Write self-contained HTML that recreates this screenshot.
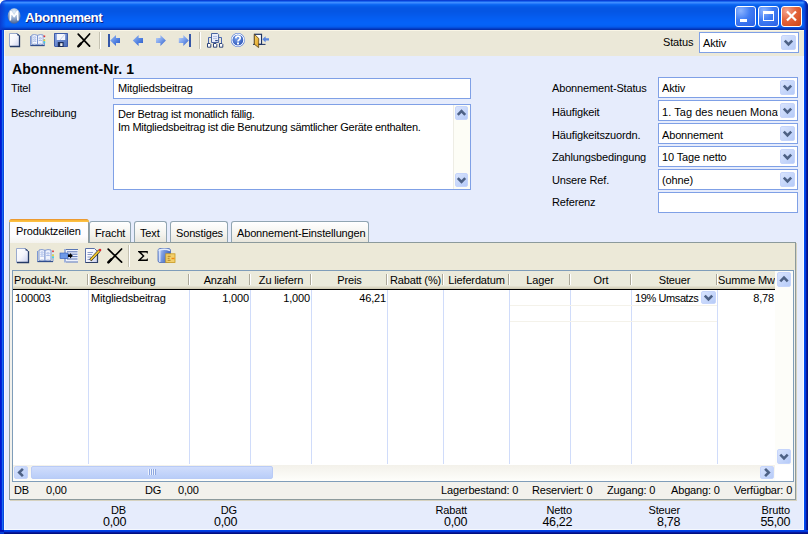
<!DOCTYPE html>
<html><head><meta charset="utf-8"><style>
*{box-sizing:border-box;margin:0;padding:0}
html,body{width:808px;height:534px;overflow:hidden;background:#fff}
body{position:relative;font-family:"Liberation Sans",sans-serif;font-size:11px;line-height:13px;color:#000}
.a{position:absolute}
.t{position:absolute;white-space:nowrap;letter-spacing:-0.15px}
.box{position:absolute;background:#fff;border:1px solid #7fa0e6}
.dd{position:absolute;width:15px;height:15px;border-radius:2px;background:linear-gradient(135deg,#d9e4fd,#b6cbf8);border:1px solid #c6d5fb}
.chev{position:absolute;width:6px;height:6px;border-right:2px solid #4d6185;border-bottom:2px solid #4d6185}
.tab{position:absolute;border:1px solid #91a5b2;border-bottom:none;border-radius:3px 3px 0 0;background:linear-gradient(#fff,#f4f3ee 60%,#e8e6dc)}
</style></head><body>
<div class="a" style="left:0;top:0;width:808px;height:30px;border-radius:6px 6px 0 0;overflow:hidden;background:linear-gradient(#0a3fd4 0px,#0a3fd4 1px,#1c66f0 1px,#1c66f0 2px,#3d8dff 2px,#3d8dff 3px,#2a7cfc 3px,#2a7cfc 4px,#0f6af4 4px,#0f6af4 5px,#0862ee 5px,#0862ee 6px,#065ce8 6px,#065ce8 7px,#0558e6 7px,#0558e6 8px,#0556e4 8px,#0556e4 9px,#0556e4 9px,#0556e4 10px,#0556e4 10px,#0556e4 11px,#0556e4 11px,#0556e4 12px,#0557e6 12px,#0557e6 13px,#0558e8 13px,#0558e8 14px,#0559ea 14px,#0559ea 15px,#055aec 15px,#055aec 16px,#055cee 16px,#055cee 17px,#055df0 17px,#055df0 18px,#055ef2 18px,#055ef2 19px,#055ff4 19px,#055ff4 20px,#0560f6 20px,#0560f6 21px,#0561f7 21px,#0561f7 22px,#0562f8 22px,#0562f8 23px,#0562f8 23px,#0562f8 24px,#0562f8 24px,#0562f8 25px,#0560f4 25px,#0560f4 26px,#055cee 26px,#055cee 27px,#0550e0 27px,#0550e0 28px,#0440c8 28px,#0440c8 29px,#0430b0 29px,#0430b0 30px)"></div>
<div class="a" style="left:0;top:0;width:8px;height:30px;border-radius:6px 0 0 0;background:linear-gradient(90deg,#0a3cd0,rgba(10,80,230,0) 6px)"></div>
<div class="a" style="left:800px;top:0;width:8px;height:30px;border-radius:0 6px 0 0;background:linear-gradient(90deg,rgba(10,80,230,0) 3px,#0a40d8 5px,#0828b0 6px,#001888 8px)"></div>
<div class="a" style="left:0;top:30px;width:4px;height:504px;background:linear-gradient(90deg,#0018d0 0px,#0018d0 1px,#0024d8 1px,#0024d8 2px,#1a6af0 2px,#1a6af0 3px,#0848e0 3px,#0848e0 4px)"></div>
<div class="a" style="left:804px;top:30px;width:4px;height:504px;background:linear-gradient(90deg,#0048f0 0px,#0048f0 1px,#0040e0 1px,#0040e0 2px,#0818a0 2px,#0818a0 3px,#001080 3px,#001080 4px)"></div>
<div class="a" style="left:0;top:530px;width:808px;height:4px;background:linear-gradient(180deg,#0040e8 0px,#0040e8 1px,#0038d8 1px,#0038d8 2px,#0818a0 2px,#0818a0 3px,#001080 3px,#001080 4px)"></div>
<div class="a" style="left:0;top:530px;width:4px;height:4px;background:linear-gradient(180deg,#0010b0 0px,#0010b0 1px,#0018c0 1px,#0018c0 2px,#0a40d0 2px,#0a40d0 3px,#0038d8 3px,#0038d8 4px)"></div>
<svg class="a" style="left:0;top:0" width="30" height="30"><defs><radialGradient id="gi" cx="0.5" cy="0.22" r="0.85"><stop offset="0" stop-color="#e4f0fa"/><stop offset="0.45" stop-color="#9cb4d4"/><stop offset="1" stop-color="#34508a"/></radialGradient></defs><ellipse cx="14.1" cy="16" rx="6.4" ry="7.8" fill="url(#gi)"/><path d="M10.3 20.5 L10.8 11.5 L14.1 16.5 L17.4 11.5 L17.9 20.5" fill="none" stroke="#fff" stroke-width="1.7" stroke-linejoin="round"/></svg>
<div class="a" style="left:25px;top:10px;font-weight:bold;font-size:13.4px;line-height:15px;letter-spacing:-0.45px;color:#fff;text-shadow:1px 1px 0 #0a2080;white-space:nowrap">Abonnement</div>
<div class="a" style="left:735px;top:6px;width:21px;height:21px;border:1px solid #fff;border-radius:3px;background:radial-gradient(circle at 25% 20%,#8cb4ff 0,#3f7cf4 45%,#2a5fe4 100%)"><div class="a" style="left:4px;top:12px;width:7px;height:3px;background:#fff"></div></div>
<div class="a" style="left:758px;top:6px;width:21px;height:21px;border:1px solid #fff;border-radius:3px;background:radial-gradient(circle at 25% 20%,#8cb4ff 0,#3f7cf4 45%,#2a5fe4 100%)"><div class="a" style="left:4px;top:4px;width:11px;height:10px;border:1px solid #fff;border-top-width:3px"></div></div>
<div class="a" style="left:781px;top:6px;width:21px;height:21px;border:1px solid #fff;border-radius:3px;background:radial-gradient(circle at 25% 20%,#f4a490 0,#e4643c 45%,#cc4414 100%)"><svg class="a" style="left:0;top:0" width="19" height="19"><path d="M5 4.5 L14 13.5 M14 4.5 L5 13.5" stroke="#fff" stroke-width="2.2"/></svg></div>
<div class="a" style="left:4px;top:30px;width:800px;height:500px;background:#e6ecfc;border-left:1px solid #f4f8ff;border-right:1px solid #f4f8ff;border-bottom:1px solid #f4f8ff"></div>
<div class="a" style="left:4px;top:30px;width:800px;height:26px;background:#ebe8d8;border-top:1px solid #faf6e6;border-left:1px solid #f8f6ee"></div>
<div class="a" style="left:99px;top:32px;width:1px;height:17px;background:#c5c2b2"></div><div class="a" style="left:100px;top:32px;width:1px;height:17px;background:#fff"></div>
<div class="a" style="left:199px;top:32px;width:1px;height:17px;background:#c5c2b2"></div><div class="a" style="left:200px;top:32px;width:1px;height:17px;background:#fff"></div>
<div class="t" style="left:663px;top:36px;">Status</div>
<div class="box" style="left:699px;top:32px;width:100px;height:21px"></div>
<div class="t" style="left:703px;top:37px;">Aktiv</div>
<div class="dd" style="left:781px;top:35px;width:15px;height:15px"><svg class="a" style="left:-1px;top:-1px" width="15" height="15"><polyline points="3.8,5.6 7.5,9.3 11.2,5.6" fill="none" stroke="#4d6185" stroke-width="2.6"/></svg></div>
<div class="a" style="left:12px;top:61px;font-weight:bold;font-size:14px;line-height:16px;letter-spacing:0.1px;white-space:nowrap">Abonnement-Nr. 1</div>
<div class="t" style="left:11px;top:82px;">Titel</div>
<div class="box" style="left:113px;top:78px;width:358px;height:21px"></div>
<div class="t" style="left:118px;top:82px;">Mitgliedsbeitrag</div>
<div class="t" style="left:11px;top:107px;">Beschreibung</div>
<div class="box" style="left:113px;top:104px;width:358px;height:86px"></div>
<div class="t" style="left:118px;top:108px;letter-spacing:-0.3px">Der Betrag ist monatlich fällig.</div>
<div class="t" style="left:118px;top:121px;letter-spacing:-0.28px">Im Mitgliedsbeitrag ist die Benutzung sämtlicher Geräte enthalten.</div>
<div class="a" style="left:453px;top:105px;width:17px;height:84px;background:#fdfdf6;border-left:1px solid #eeede5"></div>
<div class="dd" style="left:455px;top:106px;width:13px;height:14px"><svg class="a" style="left:-1px;top:-1px" width="13" height="14"><polyline points="2.8,8.9 6.5,5.2 10.2,8.9" fill="none" stroke="#4d6185" stroke-width="2.6"/></svg></div>
<div class="dd" style="left:455px;top:173px;width:13px;height:14px"><svg class="a" style="left:-1px;top:-1px" width="13" height="14"><polyline points="2.8,5.1 6.5,8.8 10.2,5.1" fill="none" stroke="#4d6185" stroke-width="2.6"/></svg></div>
<div class="t" style="left:552px;top:82px;">Abonnement-Status</div>
<div class="box" style="left:658px;top:77px;width:140px;height:21px;overflow:hidden"><div class="t" style="left:3px;top:4px;width:116px;overflow:hidden;letter-spacing:-0.15px">Aktiv</div></div>
<div class="dd" style="left:780px;top:80px;width:15px;height:15px"><svg class="a" style="left:-1px;top:-1px" width="15" height="15"><polyline points="3.8,5.6 7.5,9.3 11.2,5.6" fill="none" stroke="#4d6185" stroke-width="2.6"/></svg></div>
<div class="t" style="left:552px;top:106px;">Häufigkeit</div>
<div class="box" style="left:658px;top:100px;width:140px;height:21px;overflow:hidden"><div class="t" style="left:3px;top:5px;width:116px;overflow:hidden;letter-spacing:0.05px">1. Tag des neuen Monat</div></div>
<div class="dd" style="left:780px;top:103px;width:15px;height:15px"><svg class="a" style="left:-1px;top:-1px" width="15" height="15"><polyline points="3.8,5.6 7.5,9.3 11.2,5.6" fill="none" stroke="#4d6185" stroke-width="2.6"/></svg></div>
<div class="t" style="left:552px;top:129px;">Häufigkeitszuordn.</div>
<div class="box" style="left:658px;top:123px;width:140px;height:21px;overflow:hidden"><div class="t" style="left:3px;top:5px;width:116px;overflow:hidden;letter-spacing:-0.15px">Abonnement</div></div>
<div class="dd" style="left:780px;top:126px;width:15px;height:15px"><svg class="a" style="left:-1px;top:-1px" width="15" height="15"><polyline points="3.8,5.6 7.5,9.3 11.2,5.6" fill="none" stroke="#4d6185" stroke-width="2.6"/></svg></div>
<div class="t" style="left:552px;top:151px;">Zahlungsbedingung</div>
<div class="box" style="left:658px;top:146px;width:140px;height:21px;overflow:hidden"><div class="t" style="left:3px;top:4px;width:116px;overflow:hidden;letter-spacing:-0.15px">10 Tage netto</div></div>
<div class="dd" style="left:780px;top:149px;width:15px;height:15px"><svg class="a" style="left:-1px;top:-1px" width="15" height="15"><polyline points="3.8,5.6 7.5,9.3 11.2,5.6" fill="none" stroke="#4d6185" stroke-width="2.6"/></svg></div>
<div class="t" style="left:552px;top:174px;">Unsere Ref.</div>
<div class="box" style="left:658px;top:169px;width:140px;height:21px;overflow:hidden"><div class="t" style="left:3px;top:4px;width:116px;overflow:hidden;letter-spacing:-0.15px">(ohne)</div></div>
<div class="dd" style="left:780px;top:172px;width:15px;height:15px"><svg class="a" style="left:-1px;top:-1px" width="15" height="15"><polyline points="3.8,5.6 7.5,9.3 11.2,5.6" fill="none" stroke="#4d6185" stroke-width="2.6"/></svg></div>
<div class="t" style="left:552px;top:196px;">Referenz</div>
<div class="box" style="left:658px;top:192px;width:140px;height:21px;overflow:hidden"><div class="t" style="left:3px;top:3px;width:116px;overflow:hidden;letter-spacing:-0.15px"></div></div>
<div class="a" style="left:9px;top:242px;width:787px;height:258px;background:#f2f1ec;border:1px solid #8c9a9c;box-shadow:1px 1px 0 #d6d2c0"></div>
<div class="a" style="left:10px;top:243px;width:785px;height:27px;background:#ece9d8"></div>
<div class="tab" style="left:89px;top:221px;width:42px;height:21px"></div>
<div class="t" style="left:95px;top:227px;">Fracht</div>
<div class="tab" style="left:134px;top:221px;width:33px;height:21px"></div>
<div class="t" style="left:140px;top:227px;">Text</div>
<div class="tab" style="left:170px;top:221px;width:58px;height:21px"></div>
<div class="t" style="left:176px;top:227px;">Sonstiges</div>
<div class="tab" style="left:231px;top:221px;width:138px;height:21px"></div>
<div class="t" style="left:237px;top:227px;">Abonnement-Einstellungen</div>
<div class="a" style="left:9px;top:219px;width:80px;height:24px;border:1px solid #919b9c;border-bottom:none;border-radius:4px 4px 0 0;background:linear-gradient(#fff,#fcfcfe 70%,#f4f3ee)"></div>
<div class="a" style="left:9px;top:219px;width:80px;height:3px;border-radius:3px 3px 0 0;background:linear-gradient(#e68b2c,#ffc73c 2px,#f9b84a)"></div>
<div class="t" style="left:16px;top:225px;">Produktzeilen</div>
<div class="a" style="left:128px;top:245px;width:1px;height:22px;background:#c5c2b2"></div><div class="a" style="left:129px;top:245px;width:1px;height:22px;background:#fff"></div>
<div class="a" style="left:12px;top:270px;width:782px;height:212px;background:#fff;border:1px solid #7f9db9"></div>
<div class="a" style="left:13px;top:271px;width:762px;height:18px;background:linear-gradient(#ebeadb 0px,#ebeadb 1px,#ebeadb 14px,#ebeadb 15px,#e3e0cf 15px,#e3e0cf 16px,#dbd7c3 16px,#dbd7c3 17px,#d0cbb5 17px,#d0cbb5 18px)"></div>
<div class="a" style="left:13px;top:289px;width:762px;height:1px;background:#000"></div>
<div class="t" style="left:14px;top:274px;width:74px;overflow:hidden">Produkt-Nr.</div>
<div class="t" style="left:90px;top:274px;width:99px;overflow:hidden">Beschreibung</div>
<div class="t" style="left:190px;top:274px;width:60px;text-align:center;overflow:hidden">Anzahl</div>
<div class="t" style="left:251px;top:274px;width:60px;text-align:center;overflow:hidden">Zu liefern</div>
<div class="t" style="left:312px;top:274px;width:75px;text-align:center;overflow:hidden">Preis</div>
<div class="t" style="left:388px;top:274px;width:55px;text-align:center;overflow:hidden">Rabatt (%)</div>
<div class="t" style="left:444px;top:274px;width:65px;text-align:center;overflow:hidden">Lieferdatum</div>
<div class="t" style="left:510px;top:274px;width:60px;text-align:center;overflow:hidden">Lager</div>
<div class="t" style="left:571px;top:274px;width:60px;text-align:center;overflow:hidden">Ort</div>
<div class="t" style="left:632px;top:274px;width:85px;text-align:center;overflow:hidden">Steuer</div>
<div class="t" style="left:718px;top:274px;width:57px;text-align:center;overflow:hidden">Summe MwSt</div>
<div class="a" style="left:87px;top:274px;width:1px;height:11px;background:#aca899"></div>
<div class="a" style="left:88px;top:274px;width:1px;height:11px;background:#fff"></div>
<div class="a" style="left:88px;top:290px;width:1px;height:174px;background:#d0dcfa"></div>
<div class="a" style="left:188px;top:274px;width:1px;height:11px;background:#aca899"></div>
<div class="a" style="left:189px;top:274px;width:1px;height:11px;background:#fff"></div>
<div class="a" style="left:189px;top:290px;width:1px;height:174px;background:#d0dcfa"></div>
<div class="a" style="left:249px;top:274px;width:1px;height:11px;background:#aca899"></div>
<div class="a" style="left:250px;top:274px;width:1px;height:11px;background:#fff"></div>
<div class="a" style="left:250px;top:290px;width:1px;height:174px;background:#d0dcfa"></div>
<div class="a" style="left:310px;top:274px;width:1px;height:11px;background:#aca899"></div>
<div class="a" style="left:311px;top:274px;width:1px;height:11px;background:#fff"></div>
<div class="a" style="left:311px;top:290px;width:1px;height:174px;background:#d0dcfa"></div>
<div class="a" style="left:386px;top:274px;width:1px;height:11px;background:#aca899"></div>
<div class="a" style="left:387px;top:274px;width:1px;height:11px;background:#fff"></div>
<div class="a" style="left:387px;top:290px;width:1px;height:174px;background:#d0dcfa"></div>
<div class="a" style="left:442px;top:274px;width:1px;height:11px;background:#aca899"></div>
<div class="a" style="left:443px;top:274px;width:1px;height:11px;background:#fff"></div>
<div class="a" style="left:443px;top:290px;width:1px;height:174px;background:#d0dcfa"></div>
<div class="a" style="left:508px;top:274px;width:1px;height:11px;background:#aca899"></div>
<div class="a" style="left:509px;top:274px;width:1px;height:11px;background:#fff"></div>
<div class="a" style="left:509px;top:290px;width:1px;height:174px;background:#d0dcfa"></div>
<div class="a" style="left:569px;top:274px;width:1px;height:11px;background:#aca899"></div>
<div class="a" style="left:570px;top:274px;width:1px;height:11px;background:#fff"></div>
<div class="a" style="left:570px;top:290px;width:1px;height:174px;background:#d0dcfa"></div>
<div class="a" style="left:630px;top:274px;width:1px;height:11px;background:#aca899"></div>
<div class="a" style="left:631px;top:274px;width:1px;height:11px;background:#fff"></div>
<div class="a" style="left:631px;top:290px;width:1px;height:174px;background:#d0dcfa"></div>
<div class="a" style="left:716px;top:274px;width:1px;height:11px;background:#aca899"></div>
<div class="a" style="left:717px;top:274px;width:1px;height:11px;background:#fff"></div>
<div class="a" style="left:717px;top:290px;width:1px;height:174px;background:#d0dcfa"></div>
<div class="a" style="left:510px;top:305px;width:207px;height:1px;background:#f4f2ea"></div>
<div class="a" style="left:510px;top:321px;width:207px;height:1px;background:#f4f2ea"></div>
<div class="t" style="left:15px;top:292px;">100003</div>
<div class="t" style="left:91px;top:292px;">Mitgliedsbeitrag</div>
<div class="t" style="left:189px;top:292px;width:60px;text-align:right;">1,000</div>
<div class="t" style="left:250px;top:292px;width:60px;text-align:right;">1,000</div>
<div class="t" style="left:311px;top:292px;width:75px;text-align:right;">46,21</div>
<div class="t" style="left:635px;top:292px;letter-spacing:-0.4px">19% Umsatzs</div>
<div class="dd" style="left:701px;top:291px;width:15px;height:13px"><svg class="a" style="left:-1px;top:-1px" width="15" height="13"><polyline points="3.8,4.6 7.5,8.3 11.2,4.6" fill="none" stroke="#4d6185" stroke-width="2.6"/></svg></div>
<div class="t" style="left:717px;top:292px;width:57px;text-align:right;">8,78</div>
<div class="a" style="left:775px;top:271px;width:18px;height:194px;background:#fdfdf9"></div>
<div class="dd" style="left:777px;top:272px;width:14px;height:15px"><svg class="a" style="left:-1px;top:-1px" width="14" height="15"><polyline points="3.3,9.4 7.0,5.7 10.7,9.4" fill="none" stroke="#4d6185" stroke-width="2.6"/></svg></div>
<div class="dd" style="left:777px;top:449px;width:14px;height:15px"><svg class="a" style="left:-1px;top:-1px" width="14" height="15"><polyline points="3.3,5.6 7.0,9.3 10.7,5.6" fill="none" stroke="#4d6185" stroke-width="2.6"/></svg></div>
<div class="a" style="left:13px;top:465px;width:762px;height:16px;background:linear-gradient(#f3f1ea,#fefefb)"></div>
<div class="dd" style="left:14px;top:466px;width:14px;height:13px"><svg class="a" style="left:-1px;top:-1px" width="14" height="13"><polyline points="8.9,2.8 5.2,6.5 8.9,10.2" fill="none" stroke="#4d6185" stroke-width="2.6"/></svg></div>
<div class="dd" style="left:760px;top:466px;width:14px;height:13px"><svg class="a" style="left:-1px;top:-1px" width="14" height="13"><polyline points="5.1,2.8 8.8,6.5 5.1,10.2" fill="none" stroke="#4d6185" stroke-width="2.6"/></svg></div>
<div class="a" style="left:31px;top:466px;width:242px;height:13px;border-radius:2px;border:1px solid #b9cbf6;background:linear-gradient(#d0ddfc,#b9cdf8)"></div>
<div class="a" style="left:148px;top:469px;width:8px;height:6px;background:repeating-linear-gradient(90deg,#eef3fe 0 1px,#8da7e0 1px 2px)"></div>
<div class="a" style="left:775px;top:465px;width:18px;height:16px;background:#fff"></div>
<div class="t" style="left:14px;top:484px;">DB</div>
<div class="t" style="left:46px;top:484px;">0,00</div>
<div class="t" style="left:145px;top:484px;">DG</div>
<div class="t" style="left:178px;top:484px;">0,00</div>
<div class="t" style="left:441px;top:484px;">Lagerbestand: 0</div>
<div class="t" style="left:532px;top:484px;">Reserviert: 0</div>
<div class="t" style="left:607px;top:484px;">Zugang: 0</div>
<div class="t" style="left:671px;top:484px;">Abgang: 0</div>
<div class="t" style="left:734px;top:484px;">Verfügbar: 0</div>
<div class="t" style="left:46px;top:504px;width:80px;text-align:right;">DB</div>
<div class="t" style="left:46px;top:515px;width:80px;text-align:right;font-size:12.5px;line-height:14px;letter-spacing:-0.35px">0,00</div>
<div class="t" style="left:157px;top:504px;width:80px;text-align:right;">DG</div>
<div class="t" style="left:157px;top:515px;width:80px;text-align:right;font-size:12.5px;line-height:14px;letter-spacing:-0.35px">0,00</div>
<div class="t" style="left:387px;top:504px;width:80px;text-align:right;">Rabatt</div>
<div class="t" style="left:387px;top:515px;width:80px;text-align:right;font-size:12.5px;line-height:14px;letter-spacing:-0.35px">0,00</div>
<div class="t" style="left:492px;top:504px;width:80px;text-align:right;">Netto</div>
<div class="t" style="left:492px;top:515px;width:80px;text-align:right;font-size:12.5px;line-height:14px;letter-spacing:-0.35px">46,22</div>
<div class="t" style="left:600px;top:504px;width:80px;text-align:right;">Steuer</div>
<div class="t" style="left:600px;top:515px;width:80px;text-align:right;font-size:12.5px;line-height:14px;letter-spacing:-0.35px">8,78</div>
<div class="t" style="left:710px;top:504px;width:80px;text-align:right;">Brutto</div>
<div class="t" style="left:710px;top:515px;width:80px;text-align:right;font-size:12.5px;line-height:14px;letter-spacing:-0.35px">55,00</div>
<svg class="a" style="left:0;top:0" width="808" height="534">
<defs>
<linearGradient id="gPage" x1="0" y1="0" x2="1" y2="1"><stop offset="0" stop-color="#ffffff"/><stop offset="0.5" stop-color="#f4f5fc"/><stop offset="1" stop-color="#c9cfee"/></linearGradient>
<linearGradient id="gArrL" x1="0" y1="0" x2="1" y2="1"><stop offset="0" stop-color="#9dbcf4"/><stop offset="0.6" stop-color="#4f7fe0"/><stop offset="1" stop-color="#2b58c0"/></linearGradient>
<linearGradient id="gArrR" x1="0" y1="0" x2="1" y2="1"><stop offset="0" stop-color="#c5d8fa"/><stop offset="0.5" stop-color="#7aa0ec"/><stop offset="1" stop-color="#2f5cc4"/></linearGradient>
<linearGradient id="gFlop" x1="0" y1="0" x2="1" y2="1"><stop offset="0" stop-color="#8aa6e4"/><stop offset="1" stop-color="#4a6cb8"/></linearGradient>
<radialGradient id="gHelp" cx="0.4" cy="0.35" r="0.7"><stop offset="0" stop-color="#7aa2ec"/><stop offset="1" stop-color="#3058b8"/></radialGradient>
<linearGradient id="gDoor" x1="0" y1="0" x2="1" y2="1"><stop offset="0" stop-color="#f8d468"/><stop offset="1" stop-color="#e0a020"/></linearGradient>
<linearGradient id="gCyl" x1="0" y1="0" x2="1" y2="0.3"><stop offset="0" stop-color="#c8d8fa"/><stop offset="0.45" stop-color="#7b9be0"/><stop offset="1" stop-color="#3d62b8"/></linearGradient>
</defs>
<!-- main toolbar -->
<!-- new -->
<g>
<path d="M9.5 33.5 H17.2 L19.5 35.8 V46.5 H9.5 Z" fill="url(#gPage)" stroke="#9aaace" stroke-width="1"/>
<path d="M19.5 35.5 V46.5 H10" fill="none" stroke="#243a66" stroke-width="1.3"/>
<path d="M17 33.6 L19.4 36" stroke="#243a66" stroke-width="1"/>
<rect x="17.3" y="34" width="1.5" height="1.5" fill="#3a5080"/>
</g>
<!-- book -->
<g>
<path d="M30.5 36 V45.5 H44.5 V36" fill="none" stroke="#7d98d4" stroke-width="1"/>
<path d="M31.8 35 Q34.5 34 37.5 35.3 V44.6 Q34.5 43.6 31.8 44.6 Z" fill="#f6f8fe" stroke="#7590cc" stroke-width="0.9"/>
<path d="M37.5 35.3 Q40.5 34 43.2 35 V44.6 Q40.5 43.6 37.5 44.6 Z" fill="#eef2fc" stroke="#7590cc" stroke-width="0.9"/>
<path d="M33.2 37.3 Q34.6 36.6 36.2 37.3 M33.2 39.3 Q34.6 38.6 36.2 39.3 M33.2 41.3 Q34.6 40.6 36.2 41.3 M38.8 38.3 Q40.2 37.6 41.8 38.3 M38.8 40.5 Q40.2 39.8 41.8 40.5" fill="none" stroke="#8aa4e0" stroke-width="0.9"/>
<path d="M30.5 45.6 H44.5" stroke="#2e4a88" stroke-width="1.1"/>
<rect x="43.6" y="35.5" width="1.6" height="1.6" fill="#e83030"/>
<rect x="43.6" y="37.5" width="1.6" height="1.6" fill="#f4f4f4"/>
<rect x="43.6" y="39.5" width="1.6" height="1.6" fill="#f0e020"/>
<rect x="43.6" y="41.5" width="1.6" height="1.6" fill="#30d8e8"/>
</g>
<!-- floppy -->
<g>
<path d="M54 33 H67.5 V47 H55 L54 46 Z" fill="url(#gFlop)"/>
<path d="M54.5 33.5 H67.5 V46.5 H55 L54.5 46 Z" fill="none" stroke="#3f5ca8" stroke-width="1"/>
<rect x="56.8" y="34" width="8.4" height="6" fill="#f4f6fc"/>
<path d="M60 40 L65 34" stroke="#c8d0ec" stroke-width="1"/>
<rect x="57.8" y="42" width="5.8" height="5" fill="#1c2e5c"/>
<rect x="60.2" y="43.2" width="2.3" height="2.8" fill="#f2f2f2"/>
</g>
<!-- delete X -->
<path d="M78.2 34.2 L89.6 46.2 M89.6 34 L78.6 46.4" stroke="#000" stroke-width="1.7" stroke-linecap="round"/>
<path d="M78.3 46.3 L80.8 43.6" stroke="#000" stroke-width="2.4" stroke-linecap="round"/>
<!-- first -->
<rect x="108" y="34" width="2" height="13" fill="#3557a8"/>
<path d="M110.2 40.5 L116 35 V38 H120 V43 H116 V46 Z" fill="url(#gArrL)"/>
<!-- prev -->
<path d="M132.8 40.5 L138.6 35 V38 H143 V43 H138.6 V46 Z" fill="url(#gArrL)"/>
<!-- next -->
<path d="M165.9 40.5 L160.4 35 V38 H156 V43 H160.4 V46 Z" fill="url(#gArrR)"/>
<!-- last -->
<path d="M188.8 40.5 L183.3 35 V38 H178.8 V43 H183.3 V46 Z" fill="url(#gArrR)"/>
<rect x="189" y="34" width="2" height="13" fill="#3557a8"/>
<!-- structure -->
<g>
<path d="M208.5 43.5 V37.5 H221.5 V43.5 M215 42.5 V43.5" fill="none" stroke="#4a68b0" stroke-width="1"/>
<path d="M211.5 33.5 H217.6 L218.6 34.5 V42.5 H211.5 Z" fill="#e8ecfa" stroke="#4a64a0" stroke-width="1"/>
<path d="M213 36.5 H217 M213 38.5 H217" stroke="#a8b8e0" stroke-width="0.8"/>
<rect x="215.2" y="40" width="2.6" height="1.2" fill="#34508e"/>
<path d="M207.5 43.5 H210 L210.8 44.3 V47.2 H207.5 Z" fill="#fff" stroke="#2e4478" stroke-width="1"/>
<path d="M213.5 43.5 H216 L216.8 44.3 V47.2 H213.5 Z" fill="#fff" stroke="#2e4478" stroke-width="1"/>
<path d="M219.5 43.5 H222 L222.8 44.3 V47.2 H219.5 Z" fill="#fff" stroke="#2e4478" stroke-width="1"/>
</g>
<!-- help -->
<g>
<circle cx="237.9" cy="40" r="7" fill="#4a72d4"/>
<circle cx="237.9" cy="40" r="5.9" fill="none" stroke="#f4f8ff" stroke-width="1.2"/>
<circle cx="237.9" cy="40" r="5.2" fill="url(#gHelp)"/>
<path d="M235.7 38.3 Q235.9 36.1 238 36.1 Q240.2 36.1 240.2 38 Q240.2 39.2 238.9 39.9 Q238 40.4 238 41.5" fill="none" stroke="#fff" stroke-width="1.7"/>
<rect x="237" y="42.5" width="2" height="1.9" fill="#fff"/>
</g>
<!-- exit -->
<g>
<rect x="254.5" y="34.3" width="7" height="10" fill="#fff" stroke="#1e3464" stroke-width="1.2"/>
<path d="M253 44.4 H265.5" stroke="#1e3464" stroke-width="1"/>
<path d="M254.3 34.3 L258.8 38.5 L258.6 47.6 L254.3 44.2 Z" fill="url(#gDoor)" stroke="#5a4218" stroke-width="0.8"/>
<path d="M262.3 39.3 L265.6 36.2 V38.2 H269 V40.6 H265.6 V42.6 Z" fill="#5a86e0"/>
</g>

<!-- inner toolbar -->
<g>
<path d="M16.5 248.5 H25.5 L28.5 251.5 V262.5 H16.5 Z" fill="url(#gPage)" stroke="#9aaace" stroke-width="1"/>
<path d="M28.5 251.2 V262.5 H17" fill="none" stroke="#243a66" stroke-width="1.3"/>
<path d="M25.3 248.6 L28.4 251.7" stroke="#243a66" stroke-width="1"/>
<rect x="25.6" y="249" width="1.6" height="1.6" fill="#3a5080"/>
</g>
<g>
<path d="M37.5 251 V261.5 H53 V251" fill="none" stroke="#7d98d4" stroke-width="1"/>
<path d="M39 250 Q42 249 45 250.3 V260.6 Q42 259.6 39 260.6 Z" fill="#f6f8fe" stroke="#7590cc" stroke-width="0.9"/>
<path d="M45 250.3 Q48 249 51 250 V260.6 Q48 259.6 45 260.6 Z" fill="#eef2fc" stroke="#7590cc" stroke-width="0.9"/>
<path d="M40.5 252.3 Q42 251.6 43.6 252.3 M40.5 254.3 Q42 253.6 43.6 254.3 M40.5 256.3 Q42 255.6 43.6 256.3 M46.4 253.3 Q48 252.6 49.6 253.3 M46.4 255.5 Q48 254.8 49.6 255.5" fill="none" stroke="#8aa4e0" stroke-width="0.9"/>
<path d="M37.5 261.6 H53" stroke="#2e4a88" stroke-width="1.1"/>
<rect x="52.2" y="250.5" width="1.6" height="1.6" fill="#e83030"/>
<rect x="52.2" y="252.5" width="1.6" height="1.6" fill="#f4f4f4"/>
<rect x="52.2" y="254.5" width="1.6" height="1.6" fill="#f0e020"/>
<rect x="52.2" y="256.5" width="1.6" height="1.6" fill="#30d8e8"/>
</g>
<!-- insert -->
<g>
<rect x="64.5" y="249" width="13.5" height="13.5" fill="#eef2fc"/>
<rect x="64" y="249" width="2" height="13.5" fill="#9fb2dc"/>
<path d="M66 249.5 H78 M67 251.8 H77.5 M67 254.2 H77.5 M67 256.6 H77.5 M67 259 H77.5 M66 262 H78" stroke="#5a76b4" stroke-width="1"/>
<rect x="60" y="253" width="8" height="5.6" fill="#6e9ae8" stroke="#3058b0" stroke-width="0.6"/>
<path d="M68 254.5 H70 V253 L72.8 255.8 L70 258.6 V257.1 H68 Z" fill="#000"/>
</g>
<!-- edit -->
<g>
<path d="M85.5 248.5 H94.5 L97.5 251.5 V262.5 H85.5 Z" fill="url(#gPage)" stroke="#5a70a8" stroke-width="1"/>
<path d="M97.5 252 V262.5 H85.5" fill="none" stroke="#2e4068" stroke-width="1.2"/>
<path d="M87.5 252.5 H93 M87.5 254.5 H92 M87.5 257 H91 M87.5 259.5 H90" stroke="#7d90c4" stroke-width="0.9"/>
<path d="M90.3 260.2 L99.5 250.5" stroke="#1a1a1a" stroke-width="2.8"/>
<path d="M90.6 259.8 L99.4 250.6" stroke="#f2c830" stroke-width="1.8"/>
<circle cx="100" cy="250" r="1.3" fill="#e02828"/>
</g>
<!-- X -->
<path d="M108.2 249.2 L121.6 262.2 M121.6 249 L108.6 262.4" stroke="#000" stroke-width="1.7" stroke-linecap="round"/>
<path d="M108.3 262.3 L111.2 259.3" stroke="#000" stroke-width="2.4" stroke-linecap="round"/>
<!-- sigma -->
<path d="M138 251 H147.8 V253.6 H147 L146.5 252.6 H141.2 L144.6 256 L140.9 259.5 H146.5 L147 258.5 H147.8 V261 H138 V260.2 L142.6 256 L138 251.8 Z" fill="#000"/>
<!-- db icon -->
<g>
<rect x="158" y="248.5" width="12.5" height="14" rx="2" fill="url(#gCyl)" stroke="#4a6ab8" stroke-width="0.8"/>
<path d="M158.6 250.5 Q164.3 248 170 250.5" fill="none" stroke="#e4ecfc" stroke-width="1.6"/>
<rect x="159" y="251" width="1.5" height="11" fill="#dfe8fc" opacity="0.8"/>
<rect x="165.8" y="253.8" width="9.2" height="8.7" fill="#f2cf6c" stroke="#c99a20" stroke-width="0.8"/>
<path d="M167.6 256.3 H170.6 M167.6 258.3 H169.6 M167.6 260.3 H170.6" stroke="#a07010" stroke-width="0.8"/>
<path d="M171.5 258.5 H174.5" stroke="#f08a10" stroke-width="1.4"/>
</g>
</svg>

</body></html>
